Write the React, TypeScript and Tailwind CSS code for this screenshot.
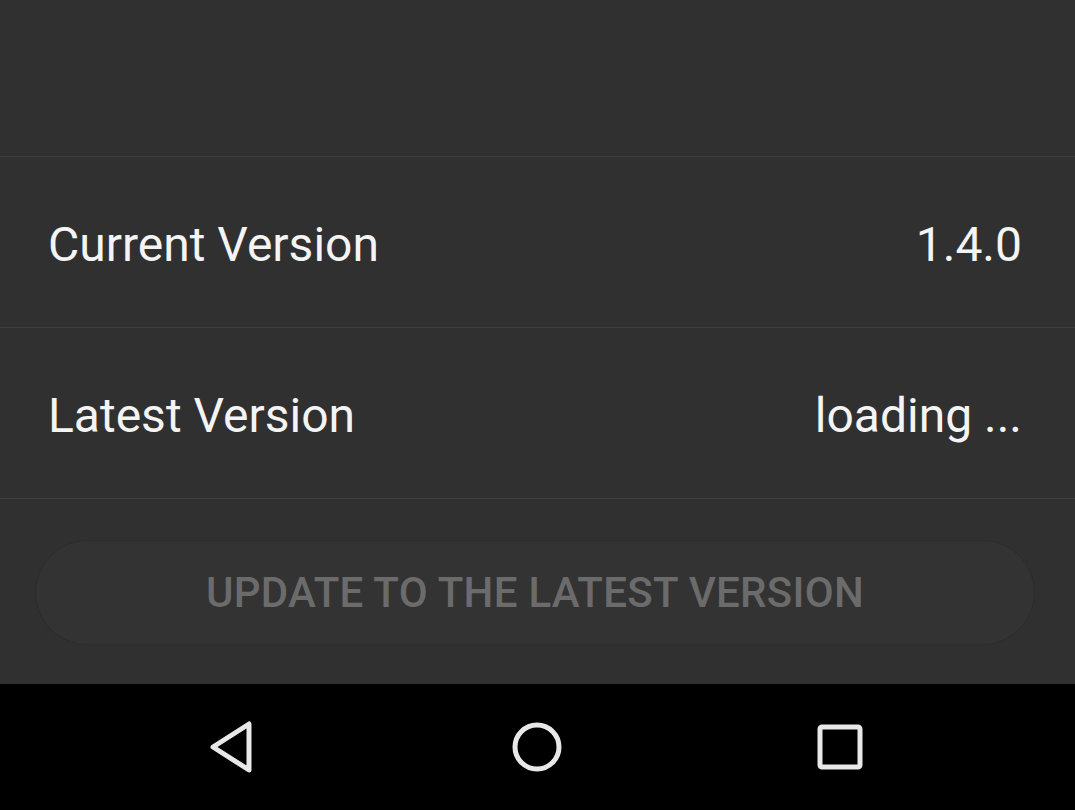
import { ReactNode } from "react";

function Row({ label, value }: { label: string; value: ReactNode }) {
  return (
    <div className="flex h-[171px] items-center justify-between border-b border-[#3d3d3d] pl-12 pr-[53px] pt-[6px]">
      <span className="text-[48px] leading-none text-[#f4f4f4]">{label}</span>
      <span className="text-[48px] leading-none text-[#f4f4f4]">{value}</span>
    </div>
  );
}

function NavBar() {
  return (
    <div className="flex h-[126px] items-center justify-center gap-[253px] bg-black pr-[4px]">
      {/* back */}
      <svg width="50" height="52" viewBox="0 0 50 52" fill="none">
        <path
          d="M41 3 L41 49 L5 26 Z"
          stroke="#e8e8e8"
          strokeWidth="5"
          strokeLinejoin="round"
        />
      </svg>
      {/* home */}
      <svg width="52" height="52" viewBox="0 0 52 52" fill="none">
        <circle cx="26" cy="26" r="22" stroke="#e8e8e8" strokeWidth="5" />
      </svg>
      {/* recents */}
      <svg width="48" height="48" viewBox="0 0 48 48" fill="none">
        <rect x="4" y="4" width="40" height="40" rx="2" stroke="#e8e8e8" strokeWidth="5" />
      </svg>
    </div>
  );
}

export default function App() {
  return (
    <div
      className="flex h-[810px] w-[1075px] flex-col overflow-hidden bg-[#303030]"
      style={{ fontFamily: "Roboto, 'Noto Sans', sans-serif" }}
    >
      <div className="h-[157px] shrink-0 border-b border-[#3d3d3d]" />
      <Row label="Current Version" value="1.4.0" />
      <Row label="Latest Version" value="loading ..." />
      <div className="flex-1 pl-[35px] pr-[40px] pt-[41px]">
        <button className="flex h-[105px] w-full items-center justify-center rounded-full border border-[#2c2c2c] bg-[#333333] text-[42px] font-medium tracking-[0.3px] text-[#6b6b6b]">
          UPDATE TO THE LATEST VERSION
        </button>
      </div>
      <NavBar />
    </div>
  );
}
